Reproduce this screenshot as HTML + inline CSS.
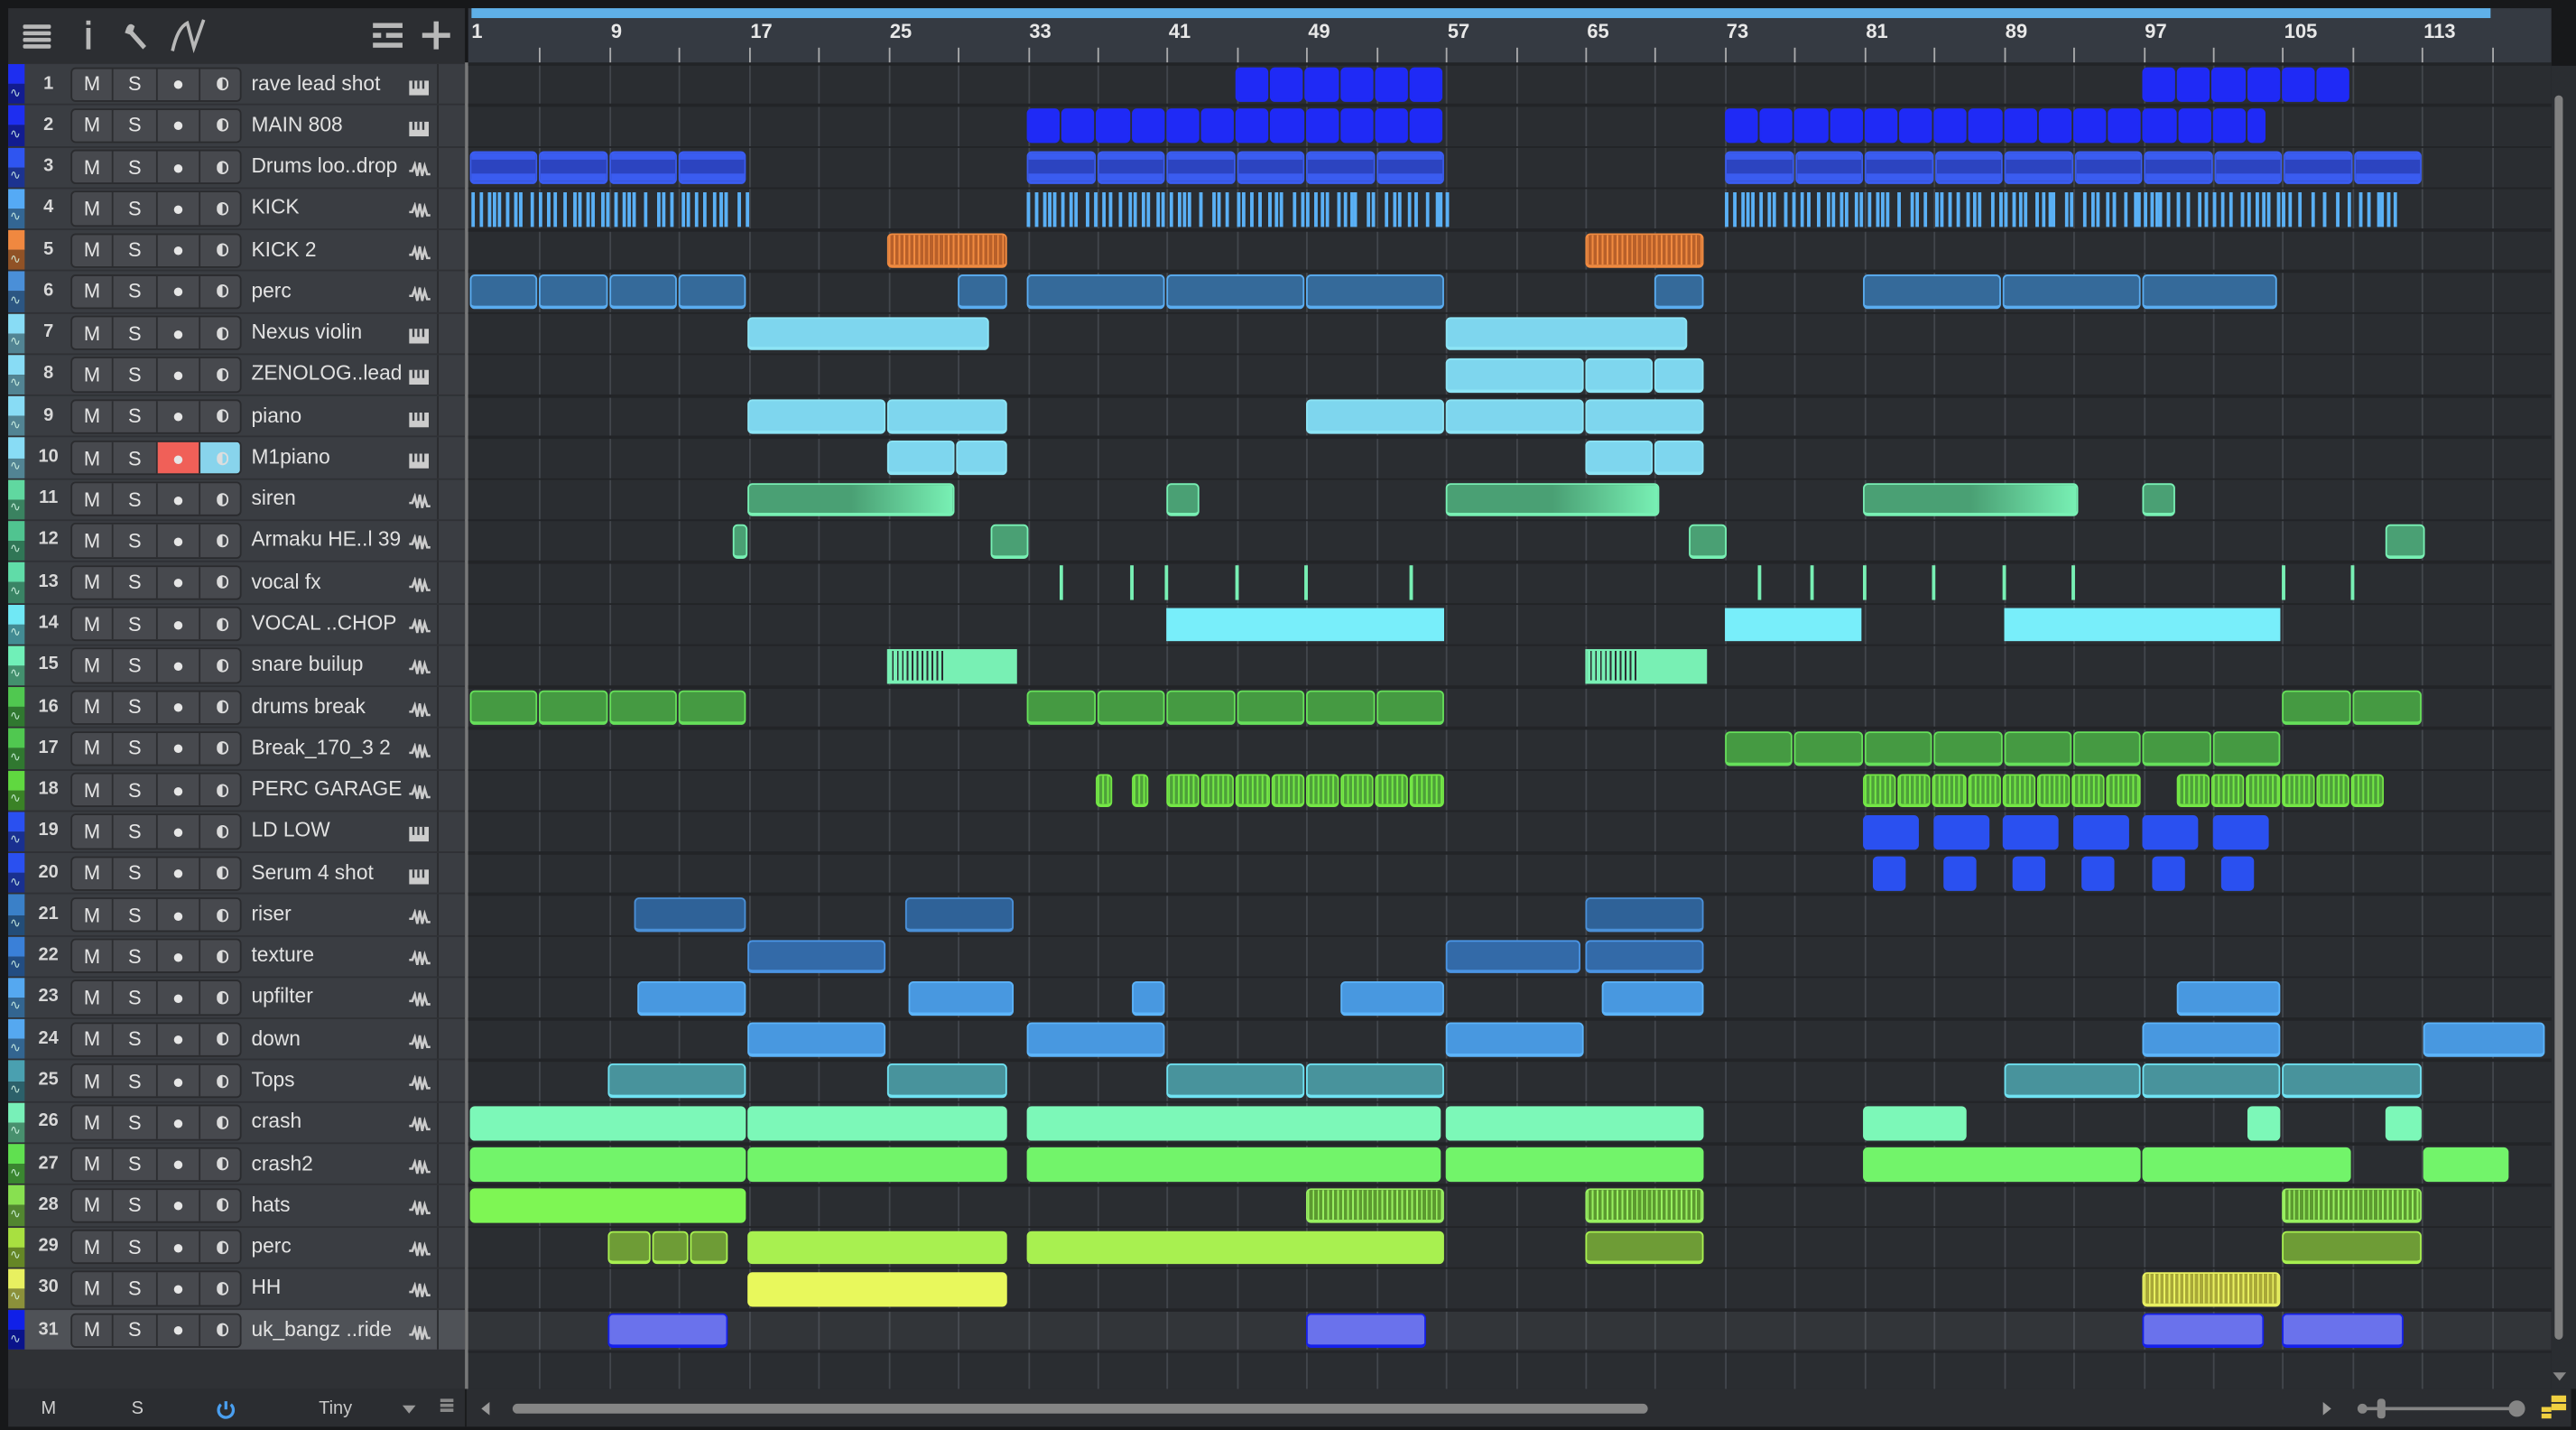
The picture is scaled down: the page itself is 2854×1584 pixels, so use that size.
<!DOCTYPE html>
<html><head><meta charset="utf-8">
<style>
html,body{margin:0;padding:0;background:#17181a;width:2854px;height:1584px;overflow:hidden}
#s{position:absolute;left:0;top:0;width:1568px;height:870px;transform-origin:0 0;transform:scale(1.82015,1.82069);font-family:"Liberation Sans",sans-serif;background:#17181a}
.a{position:absolute}
.clip{position:absolute;border-radius:3px;box-sizing:border-box}
.btn{position:absolute;top:0;height:100%;display:flex;align-items:center;justify-content:center;color:#e6e6e6;font-size:12px;border-right:1px solid #2c2d30;box-sizing:border-box}
</style></head><body>
<div id="s">
  <div class="a" style="left:5px;top:5px;width:278px;height:33px;background:#2c2e32"></div>
  <svg class="a" style="left:5px;top:5px" width="278" height="33">
    <g fill="#b8b8b8">
      <rect x="9" y="10" width="17" height="2.5" rx="1"/><rect x="9" y="14" width="17" height="2.5" rx="1"/><rect x="9" y="18" width="17" height="2.5" rx="1"/><rect x="9" y="22" width="17" height="2.5" rx="1"/>
      <rect x="47.5" y="12" width="2.6" height="13"/><rect x="47.5" y="7.5" width="2.6" height="2.6"/>
      <rect x="222" y="9" width="18" height="3"/><rect x="222" y="15" width="5" height="3"/><rect x="230" y="15" width="10" height="3"/><rect x="222" y="21" width="18" height="3"/>
      <rect x="252" y="15" width="17" height="3"/><rect x="259" y="8" width="3" height="17"/>
    </g>
    <path d="M72 12 q2 -4 5 -1 l-1 3 l8 9 l-2 2 l-8 -9 l-3 -1 z" fill="#b8b8b8"/>
    <path d="M100 26 q3 -14 9 -17 l4 15 l6 -17" stroke="#b8b8b8" stroke-width="2" fill="none"/>
  </svg>
  <div class="a" style="left:285px;top:5px;width:1268px;height:35px;background:#353a42"></div>
  <div class="a" style="left:287px;top:5px;width:1229px;height:6px;background:#5fb0e8"></div>
  <div id="ruler"></div>
  <div class="a" style="left:285px;top:40px;width:1268px;height:805px;background:#2a2d31"></div>
  <div id="grid"></div>
  <div class="a" style="left:5px;top:38px;width:278px;height:807px;background:#2f3135"></div>
  <div class="a" style="left:283px;top:38px;width:2px;height:807px;background:#d8d8d8;opacity:.5"></div>
  <div id="tracks"></div>
  <div id="clips"></div>
  <div class="a" style="left:1553px;top:40px;width:15px;height:805px;background:#2a2d31"></div>
  <div class="a" style="left:1555px;top:58px;width:5px;height:757px;background:#808080;border-radius:3px"></div>
  <div class="a" style="left:1554px;top:835px;width:0;height:0;border-left:4px solid transparent;border-right:4px solid transparent;border-top:5px solid #888"></div>
  <div class="a" style="left:5px;top:845px;width:1560px;height:23px;background:#2b2d31"></div>
  <div class="a" style="left:283px;top:845px;width:1px;height:23px;background:#1a1b1d"></div>
  <div class="a" style="left:25px;top:851px;color:#d0d0d0;font-size:11px">M</div>
  <div class="a" style="left:80px;top:851px;color:#d0d0d0;font-size:11px">S</div>
  <svg class="a" style="left:131px;top:851px" width="13" height="13"><path d="M3.5 3.5 a4.5 4.5 0 1 0 6 0" stroke="#4a9ff0" stroke-width="1.8" fill="none"/><line x1="6.5" y1="1.5" x2="6.5" y2="6.5" stroke="#4a9ff0" stroke-width="1.8"/></svg>
  <div class="a" style="left:194px;top:851px;color:#c8c8c8;font-size:11px">Tiny</div>
  <div class="a" style="left:245px;top:855px;width:0;height:0;border-left:4px solid transparent;border-right:4px solid transparent;border-top:5px solid #999"></div>
  <div class="a" style="left:268px;top:851px;width:8px;height:2px;background:#888;box-shadow:0 3px 0 #888,0 6px 0 #888"></div>
  <div class="a" style="left:293px;top:853px;width:0;height:0;border-top:4px solid transparent;border-bottom:4px solid transparent;border-right:5px solid #999"></div>
  <div class="a" style="left:312px;top:854px;width:691px;height:6px;background:#858585;border-radius:3px"></div>
  <div class="a" style="left:1414px;top:853px;width:0;height:0;border-top:4px solid transparent;border-bottom:4px solid transparent;border-left:5px solid #999"></div>
  <div class="a" style="left:1436px;top:856px;width:95px;height:2px;background:#858585"></div>
  <div class="a" style="left:1435px;top:854px;width:6px;height:6px;background:#858585;border-radius:3px"></div>
  <div class="a" style="left:1447px;top:851px;width:5px;height:12px;background:#858585;border-radius:2px"></div>
  <div class="a" style="left:1527px;top:852px;width:10px;height:10px;background:#858585;border-radius:5px"></div>
  <div class="a" style="left:1553px;top:849px;width:9px;height:4px;background:#f0d040;box-shadow:0 5px 0 #f0d040"></div>
  <div class="a" style="left:1547px;top:856px;width:6px;height:3px;background:#f0d040;box-shadow:0 4px 0 #f0d040"></div>
</div>
<script>
const S=document.getElementById('s');
function el(html){S.insertAdjacentHTML('beforeend',html);}
const X=b=>286+(b-1)*10.61;
[1,9,17,25,33,41,49,57,65,73,81,89,97,105,113].forEach(b=>{el(`<div class="a" style="left:${X(b)+1}px;top:12px;color:#e8e8e8;font-size:12px;font-weight:bold">${b}</div>`);});
for(let b=5;b<=117;b+=4){el(`<div class="a" style="left:${X(b)}px;top:29px;width:1px;height:11px;background:#c8c8c8;opacity:.8"></div>`);}
for(let b=5;b<=121;b+=4){let x=X(b);if(x<1550)el(`<div class="a" style="left:${x}px;top:40px;width:1px;height:805px;background:#42464c"></div>`);}
const T0=38.5,RH=25.27;
for(let i=0;i<=31;i++){el(`<div class="a" style="left:285px;top:${T0+i*RH-0.5}px;width:1268px;height:1.5px;background:#222427"></div>`);}
el(`<div class="a" style="left:285px;top:${T0+30*RH+1}px;width:1268px;height:${RH-1}px;background:#ffffff;opacity:.04"></div>`);
const names=['rave lead shot','MAIN 808','Drums loo..drop','KICK','KICK 2','perc','Nexus violin','ZENOLOG..lead','piano','M1piano','siren','Armaku HE..l 39','vocal fx','VOCAL ..CHOP','snare builup','drums break','Break_170_3 2','PERC GARAGE','LD LOW','Serum 4 shot','riser','texture','upfilter','down','Tops','crash','crash2','hats','perc','HH','uk_bangz ..ride'];
const inst=[1,2,7,8,9,10,19,20];
const sc=['#1e2ef0','#1e2ef0','#2f55f0','#55aaf5','#f08840','#4a8fd8','#88dcf5','#88dcf5','#88dcf5','#88dcf5','#60d8a0','#50c490','#60dca8','#70e8f5','#70f0b8','#50c850','#50c850','#60d840','#2a50f0','#2a50f0','#3a80c8','#3a80d8','#55a8f0','#55a8f0','#4aa0b0','#78f0b8','#60e050','#88e050','#a8e040','#e8f060','#1020e8'];
const pianoIco='<svg width="12" height="9"><rect x="0" y="0" width="12" height="9" fill="#ccc"/><g fill="#3a3d42"><rect x="2" y="0" width="1.3" height="5"/><rect x="5" y="0" width="1.3" height="5"/><rect x="8" y="0" width="1.3" height="5"/></g></svg>';
const waveIco='<svg width="13" height="10"><path d="M0 6 h2 l1.5 -4 l1.5 7 l1.5 -8 l1.5 8 l1.5 -6 l1.5 5 h2" stroke="#ccc" stroke-width="1.4" fill="none"/></svg>';
for(let i=0;i<31;i++){
  const t=T0+i*RH, n=i+1, hi=(n===31);
  const bg=hi?'#4f5257':'#3a3d42';
  el(`<div class="a" style="left:5px;top:${t+0.5}px;width:278px;height:${RH-1}px;background:${bg}"></div>`);
  el(`<div class="a" style="left:5px;top:${t+0.5}px;width:10px;height:${(RH-1)/2}px;background:${sc[i]}"></div>`);
  el(`<div class="a" style="left:5px;top:${t+0.5+(RH-1)/2}px;width:10px;height:${(RH-1)/2}px;background:${sc[i]};filter:brightness(.6)"></div>`);
  el(`<div class="a" style="left:6px;top:${t+13}px;color:#dfe;font-size:8px;opacity:.8">∿</div>`);
  el(`<div class="a" style="left:16px;top:${t+6}px;width:27px;text-align:center;color:#d8d8d8;font-size:11px;font-weight:bold">${n}</div>`);
  const recbg=n===10?'#f06058':'transparent', monbg=n===10?'#88d4ec':'transparent';
  el(`<div class="a" style="left:43px;top:${t+2}px;width:104px;height:${RH-4}px;background:#47494e;border:1px solid #2a2b2e;border-radius:3px;box-sizing:border-box;overflow:hidden">
   <div class="btn" style="left:0;width:25px">M</div><div class="btn" style="left:25px;width:27px">S</div>
   <div class="btn" style="left:52px;width:26px;background:${recbg}">●</div><div class="btn" style="left:78px;width:26px;border:none;background:${monbg}"><span style="display:inline-block;width:7px;height:8px;border-radius:4px;background:linear-gradient(90deg,#ddd 50%,transparent 50%);border:1px solid #ddd;box-sizing:border-box"></span></div></div>`);
  el(`<div class="a" style="left:153px;top:${t+5}px;color:#e2e2e2;font-size:12.5px;white-space:nowrap">${names[i]}</div>`);
  el(`<div class="a" style="left:249px;top:${t+6}px">${inst.includes(n)?pianoIco:waveIco}</div>`);
  el(`<div class="a" style="left:266px;top:${t+0.5}px;width:1px;height:${RH-1}px;background:#2a2b2e"></div>`);
}
const R={};
function C(row,x1,x2,n,fill,border,extra){R[row]=R[row]||[];R[row].push([x1,x2,n||1,fill,border,extra||'']);}
const B1='#1f2af6';
function segs(row,x1,x2,w,fill,border,ex){for(let x=x1;x<x2-1;x+=w)C(row,x,Math.min(x+w,x2),1,fill,border,ex);}
segs(1,752,880,21.2,B1,B1);segs(1,1304,1432,21.2,B1,B1);
segs(2,625,880,21.2,B1,B1);segs(2,1050,1380,21.2,B1,B1);
const dl='background:linear-gradient(180deg,#3a5cf0 0 25%,#2c44c0 25% 75%,#3a5cf0 75%)';
segs(3,286,455,42.3,'#2c44c0','#3a5cf0',dl);segs(3,625,880,42.5,'#2c44c0','#3a5cf0',dl);segs(3,1050,1475,42.5,'#2c44c0','#3a5cf0',dl);
function kick(x1,x2){let s=7;let x=x1;while(x<x2){s=(s*9301+49297)%233280;const r=s/233280;C(4,x,x+1.6,1,'#5ab0f5','#5ab0f5','border-radius:0');x+=2+r*6;}}
kick(287,455);kick(625,880);kick(1050,1460);
const orx='background:repeating-linear-gradient(90deg,#f08a40 0 1px,#b8602a 1px 3px)';
C(5,540,614,1,'#b8602a','#f08a40',orx);C(5,965,1038,1,'#b8602a','#f08a40',orx);
const pc=['#356a9a','#5aacf0'];
segs(6,286,455,42.3,...pc);C(6,583,614,1,...pc);segs(6,625,880,85,...pc);C(6,1007,1038,1,...pc);segs(6,1134,1387,85,...pc);
const cy=['#7ed6ee','#8ce4f5'];
C(7,455,603,1,...cy);C(7,880,1028,1,...cy);
C(8,880,965,1,...cy);C(8,965,1007,1,...cy);C(8,1007,1038,1,...cy);
C(9,455,540,1,...cy);C(9,540,614,1,...cy);C(9,795,880,1,...cy);C(9,880,965,1,...cy);C(9,965,1038,1,...cy);
C(10,540,582,1,...cy);C(10,582,614,1,...cy);C(10,965,1007,1,...cy);C(10,1007,1038,1,...cy);
const si=['#4aa074','#78f0b4'];
const sir='background:linear-gradient(90deg,#4aa074 0 50%,#78f0b4 100%)';
C(11,455,582,1,...si,sir);C(11,710,731,1,...si);C(11,880,1011,1,...si,sir);C(11,1134,1266,1,...si,sir);C(11,1304,1325,1,...si);
C(12,446,456,1,...si);C(12,603,627,1,...si);C(12,1028,1052,1,...si);C(12,1452,1477,1,...si);
[645,688,709,752,794,858,1070,1102,1134,1176,1219,1261,1389,1431].forEach(x=>C(13,x,x+1.8,1,'#78f0b4','#78f0b4','border-radius:0'));
const vc=['#78eefa','#78eefa'];
C(14,710,880,1,...vc,'border-radius:0');C(14,1050,1134,1,...vc,'border-radius:0');C(14,1220,1389,1,...vc,'border-radius:0');
const sn='border-radius:0;background:repeating-linear-gradient(90deg,#78f0b4 0 2px,#2a2d31 2px 3px) 0 0/45% 100% no-repeat,#78f0b4';
C(15,540,620,1,'#78f0b4','#78f0b4',sn);C(15,965,1040,1,'#78f0b4','#78f0b4',sn);
const db=['#459a42','#66e05a'];
segs(16,286,455,42.3,...db);segs(16,625,880,42.5,...db);segs(16,1389,1475,43,...db);
segs(17,1050,1389,42.4,...db);
const pg=['#4ea03a','#74e846','background:repeating-linear-gradient(90deg,#74e846 0 1px,#4ea03a 1px 3px)'];
C(18,667,678,1,...pg);C(18,689,700,1,...pg);segs(18,710,880,21.2,...pg);segs(18,1134,1304,21.2,...pg);segs(18,1325,1452,21.2,...pg);
const ld=['#2a50f0','#2a50f0'];
[1134,1177,1219,1262,1304,1347].forEach(x=>C(19,x,x+35,1,...ld));
[1140,1183,1225,1267,1310,1352].forEach(x=>C(20,x,x+21,1,...ld));
const ri=['#2f6298','#4a90d8'];
C(21,386,455,1,...ri);C(21,551,618,1,...ri);C(21,965,1038,1,...ri);
const tx=['#336aa8','#4a94e4'];
C(22,455,540,1,...tx);C(22,880,963,1,...tx);C(22,965,1038,1,...tx);
const up=['#4898e0','#5cb4fa'];
C(23,388,455,1,...up);C(23,553,618,1,...up);C(23,689,710,1,...up);C(23,816,880,1,...up);C(23,975,1038,1,...up);C(23,1325,1389,1,...up);
C(24,455,540,1,...up);C(24,625,710,1,...up);C(24,880,965,1,...up);C(24,1304,1389,1,...up);C(24,1475,1550,1,...up);
const tp=['#48939c','#70e2f2'];
C(25,370,455,1,...tp);C(25,540,614,1,...tp);C(25,710,795,1,...tp);C(25,795,880,1,...tp);C(25,1220,1304,1,...tp);C(25,1304,1389,1,...tp);C(25,1389,1475,1,...tp);
const cr=['#7cf8b8','#7cf8b8'];
C(26,286,455,1,...cr);C(26,455,614,1,...cr);C(26,625,878,1,...cr);C(26,880,1038,1,...cr);C(26,1134,1198,1,...cr);C(26,1368,1389,1,...cr);C(26,1452,1475,1,...cr);
const c2=['#72f46a','#72f46a'];
C(27,286,455,1,...c2);C(27,455,614,1,...c2);C(27,625,878,1,...c2);C(27,880,1038,1,...c2);C(27,1134,1304,1,...c2);C(27,1304,1432,1,...c2);C(27,1475,1528,1,...c2);
C(28,286,455,1,'#7ef654','#7ef654');
const hd=['#5c9a30','#98f060','background:repeating-linear-gradient(90deg,#98f060 0 1px,#5c9a30 1px 3px)'];
C(28,795,880,1,...hd);C(28,965,1038,1,...hd);C(28,1389,1475,1,...hd);
const pl=['#a8f050','#a8f050'],pd=['#6e9c36','#a8f050'];
C(29,370,397,1,...pd);C(29,397,420,1,...pd);C(29,420,444,1,...pd);C(29,455,614,1,...pl);C(29,625,880,1,...pl);C(29,965,1038,1,...pd);C(29,1389,1475,1,...pd);
C(30,455,614,1,'#e8f85c','#e8f85c');C(30,1304,1389,1,'#a8a838','#e8f060','background:repeating-linear-gradient(90deg,#e8f060 0 1px,#a8a838 1px 3px)');
const uk=['#6a72ec','#1520ea'];
C(31,370,444,1,...uk);C(31,795,869,1,...uk);C(31,1304,1379,1,...uk);C(31,1389,1464,1,...uk);
for(const row in R){const t=T0+(row-1)*RH;
  R[row].forEach(([x1,x2,n,f,b,ex])=>{
    el(`<div class="clip" style="left:${x1}px;top:${t+2.5}px;width:${Math.max(x2-x1-1,1.5)}px;height:${RH-4.5}px;background:${f};border:1px solid ${b};border-bottom-width:2.5px;${ex}"></div>`);
  });
}
</script>
</body></html>
